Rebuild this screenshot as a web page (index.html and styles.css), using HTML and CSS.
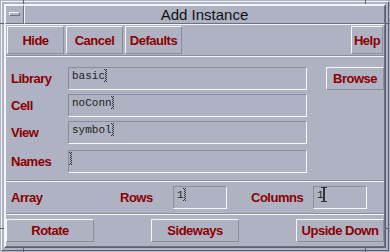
FILE: index.html
```html
<!DOCTYPE html>
<html>
<head>
<meta charset="utf-8">
<title>Add Instance</title>
<link rel="stylesheet" href="styles.css">
</head>
<body>
<div class="frame">
  <span class="tick tv tl"></span>
  <span class="tick tv tr"></span>
  <span class="tick tv bl"></span>
  <span class="tick tv br"></span>
  <span class="tick th lt"></span>
  <span class="tick th lb"></span>
  <span class="tick th rt"></span>
  <span class="tick th rb"></span>
  <div class="fo">
    <div class="win">
      <div class="titlebar">
        <div class="menubtn"><span class="menubar"></span></div>
        <div class="title">Add Instance</div>
      </div>
      <div class="client">
        <div class="toprow">
          <button class="btn tb">Hide</button>
          <button class="btn tb">Cancel</button>
          <button class="btn tb">Defaults</button>
          <button class="btn help">Help</button>
        </div>
        <div class="sep"></div>
        <div class="form">
          <div class="row">
            <span class="lbl">Library</span>
            <div class="field">basic<span class="cur"></span></div>
            <button class="btn browse">Browse</button>
          </div>
          <div class="row">
            <span class="lbl">Cell</span>
            <div class="field">noConn<span class="cur"></span></div>
          </div>
          <div class="row">
            <span class="lbl">View</span>
            <div class="field">symbol<span class="cur"></span></div>
          </div>
          <div class="row names">
            <span class="lbl">Names</span>
            <div class="field"><span class="cur start"></span></div>
          </div>
        </div>
        <div class="sep"></div>
        <div class="array">
          <span class="lbl">Array</span>
          <span class="lbl">Rows</span>
          <div class="field sfield">1<span class="cur"></span></div>
          <span class="lbl cols">Columns</span>
          <div class="field sfield">1<span class="cur solid"></span></div>
        </div>
        <div class="sep"></div>
        <div class="bottom">
          <button class="btn bb">Rotate</button>
          <button class="btn bb">Sideways</button>
          <button class="btn bb">Upside Down</button>
        </div>
      </div>
    </div>
  </div>
</div>
</body>
</html>
```

FILE: styles.css
```css
* { box-sizing: border-box; }

body {
  margin: 0;
  background: #aeb2c3;
  font-family: "Liberation Sans", Arial, sans-serif;
}

.frame {
  position: relative;
  width: 390px;
  height: 252px;
  padding: 1px;
  background: #aeb2c3;
}

.tick {
  position: absolute;
  background: #5d6070;
}
.tv { width: 1px; height: 4px; }
.th { width: 4px; height: 1px; }
.tl { left: 23px; top: 0; }
.tr { left: 365px; top: 0; }
.bl { left: 23px; bottom: 0; }
.br { left: 365px; bottom: 0; }
.lt { left: 0; top: 23px; }
.lb { left: 0; top: 228px; }
.rt { right: 0; top: 23px; }
.rb { right: 0; top: 228px; }

.fo {
  height: 100%;
  border: 1px solid;
  border-color: #f4f5f8 #5d6070 #5d6070 #f4f5f8;
  padding: 2px;
}

.win {
  height: 100%;
  border: 1px solid;
  border-color: #f4f5f8 #5d6070 #5d6070 #f4f5f8;
  display: flex;
  flex-direction: column;
}

.titlebar {
  display: flex;
  height: 19px;
  flex: none;
}

.menubtn {
  width: 19px;
  border: 1px solid;
  border-color: #f4f5f8 #6d7080 #6d7080 #f4f5f8;
  display: flex;
  align-items: center;
  justify-content: center;
}

.menubar {
  width: 11px;
  height: 4px;
  margin-top: -1px;
  border: 1px solid;
  border-color: #f4f5f8 #6d7080 #6d7080 #f4f5f8;
}

.title {
  flex: 1;
  border: 1px solid;
  border-color: #f4f5f8 #6d7080 #6d7080 #f4f5f8;
  font-size: 15px;
  line-height: 17px;
  color: #111;
  text-align: center;
}

.client {
  flex: 1;
  border: 1px solid;
  border-color: #f4f5f8 #6d7080 #6d7080 #f4f5f8;
  display: flex;
  flex-direction: column;
}

.btn {
  appearance: none;
  margin: 0;
  padding: 0;
  background: transparent;
  border: 1px solid;
  border-color: #f8f8fb #8a8d9a #8a8d9a #f8f8fb;
  color: #8b0000;
  font: bold 13px "Liberation Sans", Arial, sans-serif;
  letter-spacing: -0.5px;
  display: flex;
  align-items: center;
  justify-content: center;
  white-space: nowrap;
}

.toprow {
  display: flex;
  gap: 2px;
  padding: 1px 1px 1px 1px;
  height: 30px;
  flex: none;
}
.tb { width: 57px; height: 28px; }
.help { width: 32px; height: 28px; margin-left: auto; }

.sep {
  height: 2px;
  flex: none;
  border-top: 1px solid #8a8d9a;
  border-bottom: 1px solid #f4f5f8;
}

.form {
  display: flex;
  flex-direction: column;
  gap: 4px;
  padding: 10px 0 7px 5px;
}

.row {
  display: flex;
  align-items: center;
  height: 23px;
}
.row.names { margin-top: 2px; }

.lbl {
  color: #8b0000;
  font: bold 13px/15px "Liberation Sans", Arial, sans-serif;
  letter-spacing: -0.5px;
  white-space: nowrap;
}
.row .lbl { width: 57px; }

.field {
  width: 239px;
  height: 23px;
  border: 1px solid;
  border-color: #8a8d9a #f8f8fb #f8f8fb #8a8d9a;
  padding: 2px 0 0 3px;
  font: 11px/13px "Liberation Mono", "Courier New", monospace;
  color: #222;
  white-space: pre;
}

.browse {
  margin-left: 19px;
  width: 58px;
  height: 23px;
}

.cur {
  display: inline-block;
  position: relative;
  vertical-align: top;
  width: 2px;
  height: 13px;
  margin-top: -1px;
  background: repeating-conic-gradient(#333 0 25%, transparent 0 50%) 0 0 / 2px 2px;
}
.cur::before,
.cur::after {
  content: "";
  position: absolute;
  left: -1px;
  width: 4px;
  height: 1px;
  background: repeating-linear-gradient(90deg, #333 0 1px, transparent 1px 2px);
}
.cur::before { top: 0; }
.cur::after { bottom: 0; }
.cur.start { margin-left: -2px; }

.cur.solid {
  width: 2px;
  height: 15px;
  margin-top: -2px;
  margin-left: -1px;
  background: #333;
}
.cur.solid::before,
.cur.solid::after {
  left: -2px;
  width: 6px;
  background: #333;
}

.array {
  display: grid;
  grid-template-columns: 109px 53px 54px 86px 54px;
  align-items: center;
  padding: 4px 0 4px 5px;
  flex: none;
}
.cols { padding-left: 24px; }
.sfield { width: 54px; }

.bottom {
  display: flex;
  justify-content: space-between;
  padding: 4px 0 4px 0;
  flex: none;
}
.bb { width: 88px; height: 23px; }
```
